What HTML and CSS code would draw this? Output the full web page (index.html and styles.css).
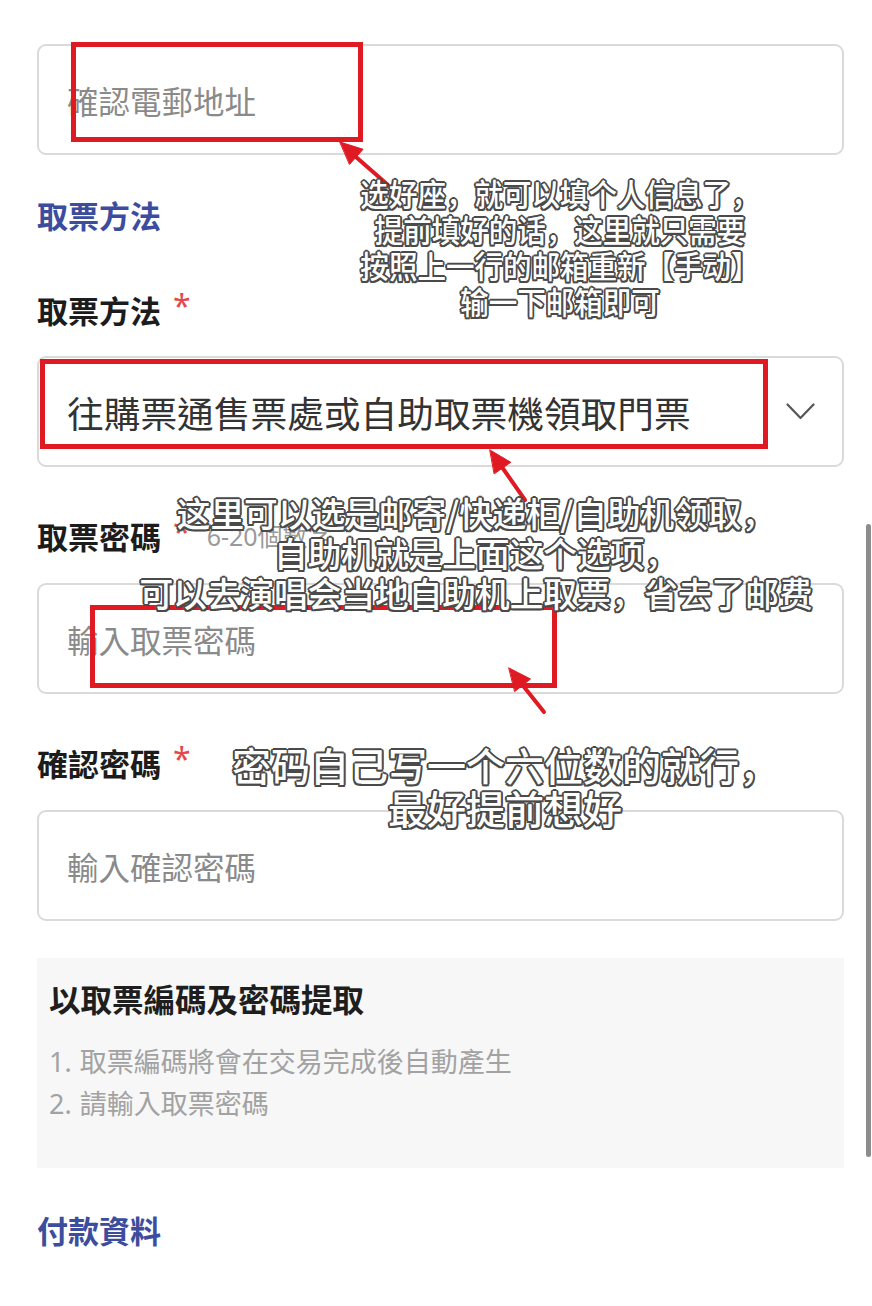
FILE: index.html
```html
<!DOCTYPE html>
<html lang="zh-Hant">
<head>
<meta charset="utf-8">
<title>取票方法</title>
<link rel="stylesheet" href="styles.css">
</head>
<body>
<div class="page">
  <div class="field"><span class="placeholder">確認電郵地址</span></div>

  <div class="section-title">取票方法</div>

  <div class="label">取票方法<span class="req">*</span></div>
  <div class="field select">
    <span class="value">往購票通售票處或自助取票機領取門票</span>
    <svg class="chevron" width="29" height="17" viewBox="0 0 29 17"><path d="M1.5 1.5 L14.5 15 L27.5 1.5" fill="none" stroke="#555" stroke-width="2.2" stroke-linecap="round" stroke-linejoin="round"/></svg>
  </div>

  <div class="label">取票密碼<span class="req">*</span><span class="hint">6-20個數字</span></div>
  <div class="field"><span class="placeholder">輸入取票密碼</span></div>

  <div class="label">確認密碼<span class="req">*</span></div>
  <div class="field"><span class="placeholder">輸入確認密碼</span></div>

  <div class="panel">
    <div class="panel-title">以取票編碼及密碼提取</div>
    <ol class="panel-list">
      <li><span class="num">1.</span>取票編碼將會在交易完成後自動產生</li>
      <li><span class="num">2.</span>請輸入取票密碼</li>
    </ol>
  </div>

  <div class="section-title pay">付款資料</div>

  <div class="overlay" lang="zh-Hans">
    <div class="mark mark1"></div>
    <div class="mark mark2"></div>
    <div class="mark mark3"></div>
    <svg class="arrows" width="872" height="1306" viewBox="0 0 872 1306">
      <g fill="#e01a22" stroke="#e01a22" stroke-width="4" stroke-linecap="round">
        <line x1="388" y1="185" x2="356" y2="157"/>
        <polygon stroke-width="1" points="340,142 363.1,149.3 349.7,164.2"/>
        <line x1="525" y1="500" x2="502.6" y2="468"/>
        <polygon stroke-width="1" points="490,450 510.8,462.3 494.4,473.7"/>
        <line x1="544" y1="712" x2="522.7" y2="685.2"/>
        <polygon stroke-width="1" points="509,668 530.5,679 514.9,691.4"/>
      </g>
    </svg>
    <div class="note note1">选好座，就可以填个人信息了，<br>提前填好的话，这里就只需要<br>按照上一行的邮箱重新【手动】<br>输一下邮箱即可</div>
    <div class="note note2">这里可以选是邮寄/快递柜/自助机领取，<br>自助机就是上面这个选项，<br>可以去演唱会当地自助机上取票，省去了邮费</div>
    <div class="note note3">密码自己写一个六位数的就行，<br>最好提前想好</div>
    <div class="scrollbar"></div>
  </div>
</div>
</body>
</html>
```

FILE: styles.css
```css
html, body {
  margin: 0;
  padding: 0;
  background: #ffffff;
}

body {
  font-family: "Noto Sans CJK TC", "Noto Sans", sans-serif;
  color: #1c1c1c;
}

.page {
  position: relative;
  width: 872px;
  height: 1306px;
  box-sizing: border-box;
  padding: 44px 28px 0 37px;
  overflow: hidden;
}

.field {
  height: 111px;
  box-sizing: border-box;
  border: 2px solid #dadada;
  border-radius: 9px;
  display: flex;
  align-items: center;
  padding: 0 28px;
}

.placeholder {
  font-size: 31.5px;
  color: #8a8a8a;
  line-height: 40px;
}

.select {
  justify-content: space-between;
  margin-top: 26px;
  padding-right: 27px;
}

.value {
  font-size: 36.7px;
  color: #333333;
  line-height: 44px;
}

.chevron {
  display: block;
}

.section-title {
  margin-top: 40px;
  height: 40px;
  line-height: 40px;
  font-size: 31px;
  font-weight: 700;
  color: #3d4d9e;
}

.label {
  margin-top: 55px;
  height: 40px;
  line-height: 40px;
  font-size: 31px;
  font-weight: 700;
  color: #1c1c1c;
  display: flex;
  align-items: center;
}

.label + .field {
  margin-top: 27px;
}

.label + .select {
  margin-top: 26px;
}

.select + .label {
  margin-top: 51px;
}

.field + .label {
  margin-top: 49px;
}

.req {
  align-self: flex-start;
  margin-left: 12px;
  font-family: "Noto Sans", sans-serif;
  font-size: 32px;
  line-height: 32px;
  font-weight: 400;
  color: #e5484b;
}

.hint {
  margin-left: 16px;
  font-family: "Noto Sans", "Noto Sans CJK TC", sans-serif;
  font-size: 25px;
  font-weight: 400;
  color: #9a9a9a;
}

.panel {
  margin-top: 37px;
  height: 210px;
  box-sizing: border-box;
  background: #f7f7f7;
  padding: 20px 13px 0 12px;
}

.panel-title {
  height: 40px;
  line-height: 40px;
  font-size: 31.5px;
  font-weight: 700;
  color: #1e1e1e;
}

.panel-list {
  list-style: none;
  margin: 22px 0 0;
  padding: 0;
}

.panel-list li {
  height: 42px;
  line-height: 42px;
  font-size: 27px;
  color: #a2a2a2;
}

.num {
  font-family: "Noto Sans", sans-serif;
  margin-right: 8px;
}

.pay {
  margin-top: 42px;
}

/* annotation layer */
.overlay {
  position: absolute;
  left: 0;
  top: 0;
  width: 872px;
  height: 1306px;
  pointer-events: none;
}

.mark {
  position: absolute;
  box-sizing: border-box;
  border: 5px solid #e01a22;
}

.mark1 { left: 71px; top: 42px; width: 292px; height: 100px; }
.mark2 { left: 40px; top: 359px; width: 728px; height: 90px; }
.mark3 { left: 90px; top: 605px; width: 467px; height: 83px; }

.arrows {
  position: absolute;
  left: 0;
  top: 0;
}

.note {
  position: absolute;
  text-align: center;
  white-space: nowrap;
  font-family: "Noto Sans CJK SC", "Noto Sans", sans-serif;
  font-weight: 500;
  color: #ffffff;
  transform-origin: center top;
  text-shadow:
    -2px 0 #4a4a4a, 2px 0 #4a4a4a, 0 -2px #4a4a4a, 0 2px #4a4a4a,
    -1.5px -1.5px #4a4a4a, 1.5px -1.5px #4a4a4a,
    -1.5px 1.5px #4a4a4a, 1.5px 1.5px #4a4a4a;
}

.note1 {
  left: 260px;
  width: 600px;
  top: 175px;
  font-size: 31px;
  line-height: 36px;
  transform: scaleX(0.92);
}

.note2 {
  left: 126px;
  width: 700px;
  top: 493px;
  font-size: 34px;
  line-height: 40px;
  transform: scaleX(0.99);
}

.note3 {
  left: 155px;
  width: 700px;
  top: 743px;
  font-size: 39px;
  line-height: 43px;
}

.scrollbar {
  position: absolute;
  left: 866px;
  top: 524px;
  width: 5px;
  height: 633px;
  border-radius: 3px;
  background: #8c8c8c;
}
```
